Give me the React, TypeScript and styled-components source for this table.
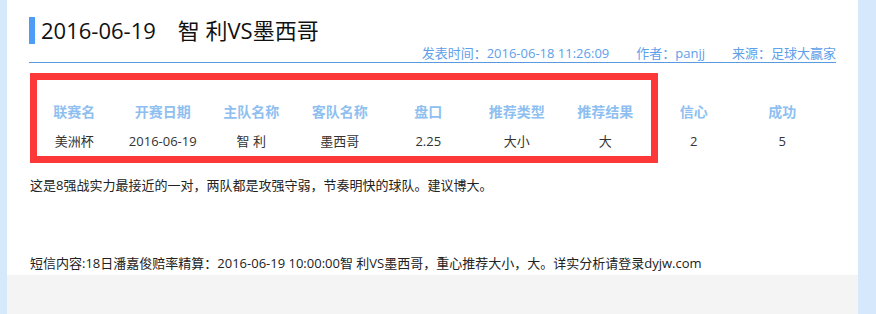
import styled, { createGlobalStyle } from "styled-components";

const GlobalStyle = createGlobalStyle`
  html, body {
    margin: 0;
    padding: 0;
    background: #d6e9fc;
  }
  body {
    font-family: "Open Sans", "Noto Sans CJK SC", sans-serif;
  }
`;

const columns = [
  { head: "联赛名", value: "美洲杯" },
  { head: "开赛日期", value: "2016-06-19" },
  { head: "主队名称", value: "智 利" },
  { head: "客队名称", value: "墨西哥" },
  { head: "盘口", value: "2.25" },
  { head: "推荐类型", value: "大小" },
  { head: "推荐结果", value: "大" },
  { head: "信心", value: "2" },
  { head: "成功", value: "5" },
];

const App = () => {
  return (
    <Page>
      <GlobalStyle />
      <Panel>
        <Article>
          <Title>2016-06-19　智 利VS墨西哥</Title>
          <Meta>
            <span>发表时间：2016-06-18 11:26:09</span>
            <span>作者：panjj</span>
            <span>来源：足球大赢家</span>
          </Meta>
          <TableArea>
            <Tips>
              {columns.map((c) => (
                <HeadCell key={c.head}>{c.head}</HeadCell>
              ))}
              {columns.map((c) => (
                <Cell key={c.head}>{c.value}</Cell>
              ))}
            </Tips>
            <Highlight />
          </TableArea>
          <Text>这是8强战实力最接近的一对，两队都是攻强守弱，节奏明快的球队。建议博大。</Text>
          <Sms>
            短信内容:18日潘嘉俊赔率精算：2016-06-19 10:00:00智 利VS墨西哥，重心推荐大小，大。详实分析请登录dyjw.com
          </Sms>
        </Article>
        <Footer />
      </Panel>
    </Page>
  );
};
export default App;

const Page = styled.div`
  width: 876px;
  height: 314px;
  overflow: hidden;
`;

const Panel = styled.div`
  margin-left: 7px;
  width: 851px;
  height: 314px;
  background: #fff;
  display: flex;
  flex-direction: column;
`;

const Article = styled.div`
  padding: 17px 22px 0 22px;
  height: 258px;
`;

const Title = styled.h1`
  margin: 0;
  height: 27px;
  border-left: 6px solid #4d9cf8;
  padding-left: 6px;
  font-size: 22px;
  line-height: 27px;
  font-weight: 400;
  color: #111;
  white-space: nowrap;
`;

const Meta = styled.div`
  display: flex;
  justify-content: flex-end;
  gap: 27px;
  padding-top: 1px;
  height: 17px;
  line-height: 17px;
  font-size: 13px;
  color: #5ea0ea;
  border-bottom: 1px solid #5a9ae0;
`;

const TableArea = styled.div`
  position: relative;
  padding: 35px 0 0 1px;
`;

const Tips = styled.div`
  display: grid;
  grid-template-columns: repeat(9, 88.5px);
  grid-auto-rows: 28px;
  row-gap: 1px;
`;

const HeadCell = styled.div`
  text-align: center;
  line-height: 28px;
  font-size: 14px;
  font-weight: 700;
  color: #8fbff1;
`;

const Cell = styled.div`
  text-align: center;
  line-height: 28px;
  font-size: 13px;
  color: #333;
`;

// red marker frame drawn over the first seven columns
const Highlight = styled.div`
  position: absolute;
  left: 1px;
  top: 10px;
  width: 628px;
  height: 90px;
  box-sizing: border-box;
  border: 7px solid #fc3838;
  pointer-events: none;
`;

const Text = styled.p`
  margin: 20px 0 0 1px;
  font-size: 13px;
  line-height: 20px;
  color: #222;
`;

const Sms = styled.p`
  margin: 58px 0 0 1px;
  font-size: 13px;
  line-height: 20px;
  color: #222;
  white-space: nowrap;
`;

const Footer = styled.div`
  flex: 1;
  background: #f4f4f4;
`;
